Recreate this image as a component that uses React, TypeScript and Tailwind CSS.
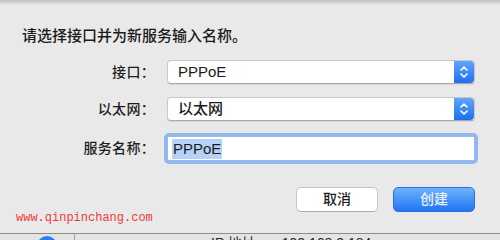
import React from 'react';

const cjk = { fontFamily: '"Liberation Sans", "Noto Sans CJK SC", sans-serif' };

function Stepper() {
  return (
    <div className="w-[20px] h-full rounded-r-[4px] bg-gradient-to-b from-[#5ea5fc] to-[#1d6ef1] flex items-center justify-center">
      <svg width="10" height="14" viewBox="0 0 10 14" fill="none" stroke="white" strokeWidth="1.6" strokeLinecap="round" strokeLinejoin="round">
        <path d="M2 5 L5 2 L8 5" />
        <path d="M2 9 L5 12 L8 9" />
      </svg>
    </div>
  );
}

function Popup({ value }: { value: string }) {
  return (
    <div className="h-[24px] w-[308px] flex rounded-[4px] bg-white border border-[#c8c8c8] border-b-[#a8a8a8] shadow-[0_1px_1px_rgba(0,0,0,0.08)]">
      <div className="flex-1 flex items-center pl-[10px] text-[15px] text-[#1b1b1b] font-medium">{value}</div>
      <Stepper />
    </div>
  );
}

function Row({ label, children }: { label: string; children: React.ReactNode }) {
  return (
    <div className="flex items-center">
      <div className="w-[155px] text-right text-[14px] text-[#1d1d1d] font-medium tracking-[0.3px]">{label}</div>
      <div className="ml-[12px]">{children}</div>
    </div>
  );
}

export default function App() {
  return (
    <div className="w-[500px] h-[240px] overflow-hidden bg-[#e9e9e9] flex flex-col relative" style={cjk}>
      <div className="h-[233px] flex flex-col">
        <div className="h-[5px] bg-gradient-to-b from-[#bdbdbd] to-[#e9e9e9]" />
        <div className="mt-[21px] pl-[22px] text-[15px] leading-[20px] text-[#1a1a1a] font-medium">请选择接口并为新服务输入名称。</div>

        <div className="mt-[14px] flex flex-col">
          <Row label="接口：">
            <Popup value="PPPoE" />
          </Row>
          <div className="mt-[13px]">
            <Row label="以太网：">
              <Popup value="以太网" />
            </Row>
          </div>
          <div className="mt-[12px]">
            <Row label="服务名称：">
              <div className="w-[314px] -ml-[3px] h-[31px] rounded-[5px] bg-[#8db8f0] p-[3px]">
                <div className="h-full bg-white border border-[#9fb9dd] flex items-center pl-[4px]">
                  <span className="bg-[#b5d3f8] text-[15px] leading-[20px] text-[#1b1b1b] px-[1px] font-medium">PPPoE</span>
                </div>
              </div>
            </Row>
          </div>
        </div>

        <div className="mt-[23px] flex justify-end gap-[15px] pr-[25px]">
          <button className="w-[82px] h-[25px] rounded-[5px] bg-white border border-[#c4c4c4] border-b-[#a9a9a9] text-[14px] text-[#1d1d1d] font-medium">
            取消
          </button>
          <button className="w-[82px] h-[25px] rounded-[5px] bg-gradient-to-b from-[#6db2fb] to-[#1f73f2] border border-[#2a72e0] text-[14px] text-[#eaf2ff] font-medium">
            创建
          </button>
        </div>
      </div>

      <div
        className="absolute left-[16px] top-[211px] text-[12px] leading-[14px] text-[#f03a3a]"
        style={{ fontFamily: '"Liberation Mono", monospace' }}
      >
        www.qinpinchang.com
      </div>

      <div className="h-[7px] border-t border-[#8c8c8c] bg-[#e4e4e4] flex overflow-hidden">
        <div className="ml-[37px] mt-[2px] w-[20px] h-[20px] shrink-0 rounded-full bg-[#2a7ef4]" />
        <div className="ml-[17px] w-px h-full bg-[#a0a0a0]" />
        <div className="ml-[136px] mt-[1px] text-[14px] leading-[16px] text-[#222] whitespace-nowrap">
          IP 地址:<span className="ml-[22px]">192.168.2.184</span>
        </div>
      </div>
    </div>
  );
}
